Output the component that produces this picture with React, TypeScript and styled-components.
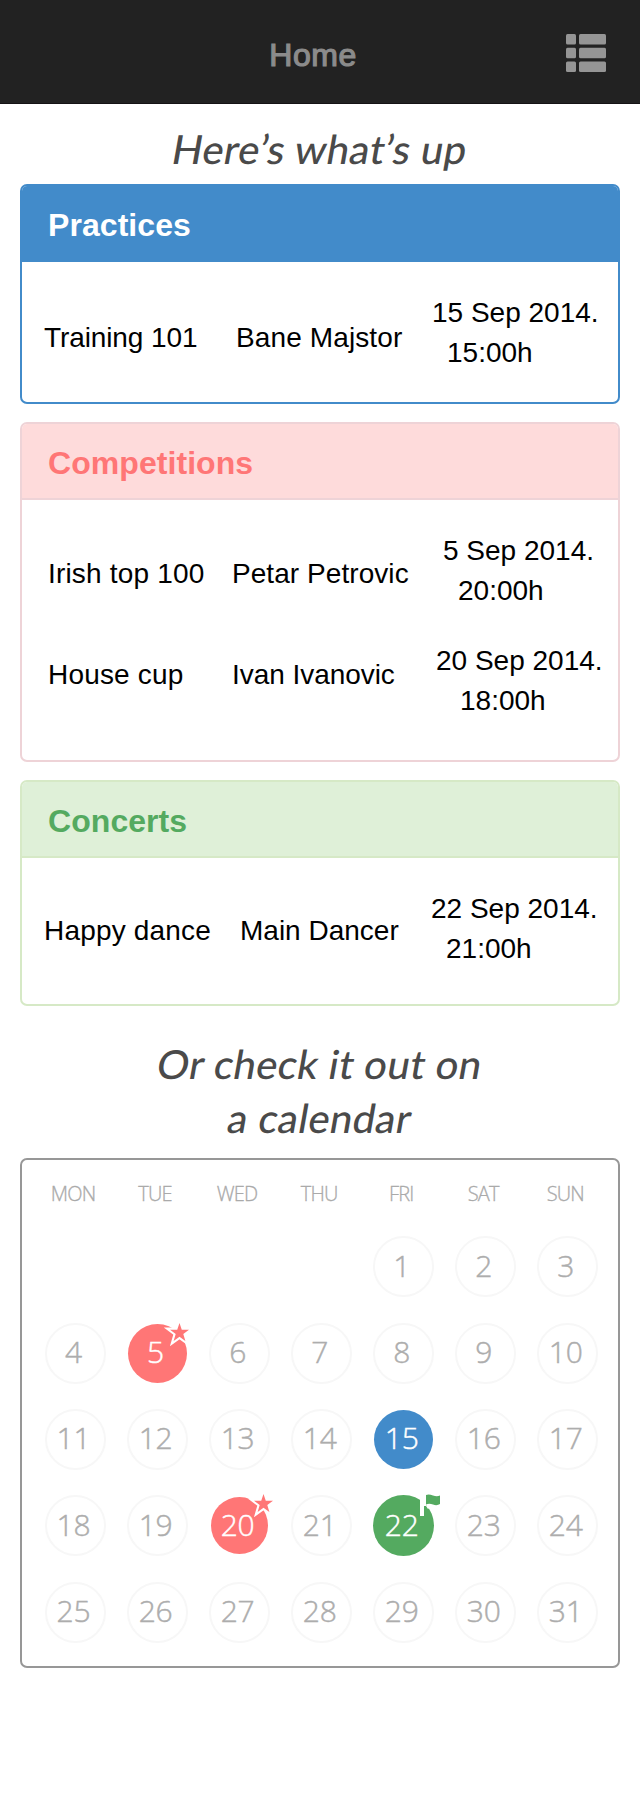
import React from 'react';
import styled, { createGlobalStyle, css } from 'styled-components';

const Global = createGlobalStyle`
  * { box-sizing: border-box; }
  body { margin: 0; background: #fff; font-family: "Liberation Sans", Arial, sans-serif; color: #000; }
  h1, h2, h3, p { margin: 0; }
`;

const Page = styled.main`
  width: 640px;
  height: 1800px;
  overflow: hidden;
  background: #fff;
`;

const NavBar = styled.header`
  display: grid;
  grid-template-columns: 1fr auto 1fr;
  align-items: center;
  height: 104px;
  padding: 2px 34px 0 20px;
  background: #222;
  border-bottom: 1px solid #151315;
`;

const NavTitle = styled.h1`
  grid-column: 2;
  padding-top: 5px;
  font-size: 32px;
  font-weight: 400;
  line-height: 40px;
  letter-spacing: 0.5px;
  color: #8b8b8b;
  -webkit-text-stroke: 1.2px #8b8b8b;
`;

const MenuIcon = styled.svg`
  justify-self: end;
  display: block;
  fill: #959595;
`;

const Heading = styled.h2<{ $top: number; $bottom: number }>`
  padding: ${p => p.$top}px 0 ${p => p.$bottom}px;
  font-family: Lato, sans-serif;
  font-size: 40px;
  font-weight: 500;
  line-height: 54px;
  letter-spacing: 0.4px;
  text-align: center;
  color: #4a4a4a;
`;

const SlantedLine = styled.span`
  display: block;
  transform: skewX(-10deg);
`;

type Tone = 'blue' | 'red' | 'green';

const tones = {
  blue: { border: '#428bca', fill: '#428bca', text: '#ffffff' },
  red: { border: '#eed3d7', fill: '#fedbdb', text: '#ff7676' },
  green: { border: '#d6e9c6', fill: '#dff0d8', text: '#54aa60' },
};

const Panel = styled.section<{ $tone: Tone; $height: number }>`
  height: ${p => p.$height}px;
  margin: 0 20px 18px;
  border: 2px solid ${p => tones[p.$tone].border};
  border-radius: 7px;
  overflow: hidden;
`;

const PanelTitle = styled.h3<{ $tone: Tone }>`
  height: 76px;
  padding-left: 26px;
  border-bottom: 2px solid ${p => tones[p.$tone].border};
  background: ${p => tones[p.$tone].fill};
  color: ${p => tones[p.$tone].text};
  font-size: 32px;
  font-weight: 700;
  line-height: 78px;
  letter-spacing: 0.06px;
`;

const Row = styled.div<{ $cols: string; $left: number; $top?: number }>`
  display: grid;
  grid-template-columns: ${p => p.$cols};
  padding: ${p => p.$top ?? 31}px 0 0 ${p => p.$left}px;
  font-size: 28px;
  line-height: 40px;
  white-space: nowrap;
`;

const Cell = styled.div<{ $drop?: number; $spacing?: number }>`
  padding-top: ${p => p.$drop ?? 0}px;
  letter-spacing: ${p => p.$spacing ?? 0}px;
`;

const Time = styled.div<{ $indent: number }>`
  padding-left: ${p => p.$indent}px;
`;

const Calendar = styled.section`
  height: 510px;
  margin: 0 20px;
  padding: 22px 0 0 12px;
  border: 2px solid #979797;
  border-radius: 7px;
  font-family: "Open Sans", sans-serif;
  font-weight: 300;
`;

const WeekHeader = styled.div`
  display: grid;
  grid-template-columns: repeat(7, 82.05px);
  height: 41.5px;
  margin-left: -2px;
  font-size: 20px;
  line-height: 24px;
  letter-spacing: -0.8px;
  text-align: center;
  color: #aaa;
  -webkit-text-stroke: 0.3px #aaa;
`;

const DayGrid = styled.div`
  display: grid;
  grid-template-columns: repeat(7, 82.05px);
  grid-auto-rows: 86.4px;
`;

const Slot = styled.div`
  display: flex;
  align-items: center;
  justify-content: center;
`;

const Day = styled.div<{ $fill?: string; $size?: number }>`
  position: relative;
  display: flex;
  align-items: center;
  justify-content: center;
  width: ${p => p.$size ?? 61}px;
  height: ${p => p.$size ?? 61}px;
  padding: 0 3px 2px 0;
  border-radius: 50%;
  font-size: 30px;
  line-height: 40px;
  letter-spacing: -0.2px;
  color: #adadad;
  -webkit-text-stroke: 0.45px currentColor;
  ${p => p.$fill ? css`background: ${p.$fill}; color: #fff;` : css`border: 2px solid #f7f7f7;`}
`;

const Mark = styled.svg<{ $x: number; $y: number }>`
  position: absolute;
  left: ${p => p.$x}px;
  top: ${p => p.$y}px;
  overflow: visible;
`;

function Star({ x, y }: { x: number; y: number }) {
  return (
    <Mark $x={x} $y={y} width="19" height="19" viewBox="0 0 20 20">
      <path d="M10 0 L12.4 7 L20 7 L14 11.5 L16.2 19 L10 14.6 L3.8 19 L6 11.5 L0 7 L7.6 7 Z"
        fill="#ff7676" stroke="#fff" strokeWidth="4.4" paintOrder="stroke" />
    </Mark>
  );
}

function Flag() {
  return (
    <Mark $x={47.5} $y={-1} width="20" height="22" viewBox="0 0 20 22">
      <path d="M0 0 H6 V12 H4 V22 H0 Z" fill="#fff" />
      <path d="M6 12 L9 11 L12 12 L8 15 Z" fill="#fff" />
      <path d="M6 1 Q9 0 13 1.5 Q17 3 20 1.5 V10 Q17 12 13 10.5 Q9 9 6 10.5 Z" fill="#54aa60" />
    </Mark>
  );
}

const events: Record<number, { fill: string; size: number; mark?: React.ReactNode }> = {
  5: { fill: '#ff7676', size: 59, mark: <Star x={42.5} y={-0.5} /> },
  15: { fill: '#428bca', size: 59 },
  20: { fill: '#ff7676', size: 57, mark: <Star x={43} y={-3} /> },
  22: { fill: '#54aa60', size: 61, mark: <Flag /> },
};

const weekdays = ['MON', 'TUE', 'WED', 'THU', 'FRI', 'SAT', 'SUN'];

export default function App() {
  return (
    <Page>
      <Global />
      <NavBar>
        <NavTitle>Home</NavTitle>
        <MenuIcon width="40" height="38" viewBox="0 0 40 38">
          {[0, 13.7, 27.4].map(y => (
            <g key={y}>
              <rect x="0" y={y} width="10" height="10.6" rx="1.5" />
              <rect x="13" y={y} width="27" height="10.6" rx="1.5" />
            </g>
          ))}
        </MenuIcon>
      </NavBar>

      <Heading $top={18} $bottom={8}>
        <SlantedLine>Here’s what’s up</SlantedLine>
      </Heading>

      <Panel $tone="blue" $height={220}>
        <PanelTitle $tone="blue">Practices</PanelTitle>
        <Row $cols="192px 196px 1fr" $left={22}>
          <Cell $drop={25} $spacing={-0.1}>Training 101</Cell>
          <Cell $drop={25} $spacing={0.12}>Bane Majstor</Cell>
          <Cell>15 Sep 2014.<Time $indent={15}>15:00h</Time></Cell>
        </Row>
      </Panel>

      <Panel $tone="red" $height={340}>
        <PanelTitle $tone="red">Competitions</PanelTitle>
        <Row $cols="184px 211px 1fr" $left={26}>
          <Cell $drop={23} $spacing={0.18}>Irish top 100</Cell>
          <Cell $drop={23} $spacing={0.06}>Petar Petrovic</Cell>
          <Cell>5 Sep 2014.<Time $indent={15}>20:00h</Time></Cell>
        </Row>
        <Row $cols="184px 204px 1fr" $left={26} $top={30}>
          <Cell $drop={14} $spacing={0.18}>House cup</Cell>
          <Cell $drop={14} $spacing={-0.05}>Ivan Ivanovic</Cell>
          <Cell>20 Sep 2014.<Time $indent={24}>18:00h</Time></Cell>
        </Row>
      </Panel>

      <Panel $tone="green" $height={226}>
        <PanelTitle $tone="green">Concerts</PanelTitle>
        <Row $cols="196px 191px 1fr" $left={22}>
          <Cell $drop={22} $spacing={0.18}>Happy dance</Cell>
          <Cell $drop={22}>Main Dancer</Cell>
          <Cell>22 Sep 2014.<Time $indent={15}>21:00h</Time></Cell>
        </Row>
      </Panel>

      <Heading $top={13} $bottom={13}>
        <SlantedLine>Or check it out on</SlantedLine>
        <SlantedLine>a calendar</SlantedLine>
      </Heading>

      <Calendar>
        <WeekHeader>{weekdays.map(d => <span key={d}>{d}</span>)}</WeekHeader>
        <DayGrid>
          {Array.from({ length: 35 }, (_, i) => {
            const n = i - 3;
            const e = events[n];
            return (
              <Slot key={i}>
                {n > 0 && <Day $fill={e?.fill} $size={e?.size}>{n}{e?.mark}</Day>}
              </Slot>
            );
          })}
        </DayGrid>
      </Calendar>
    </Page>
  );
}
